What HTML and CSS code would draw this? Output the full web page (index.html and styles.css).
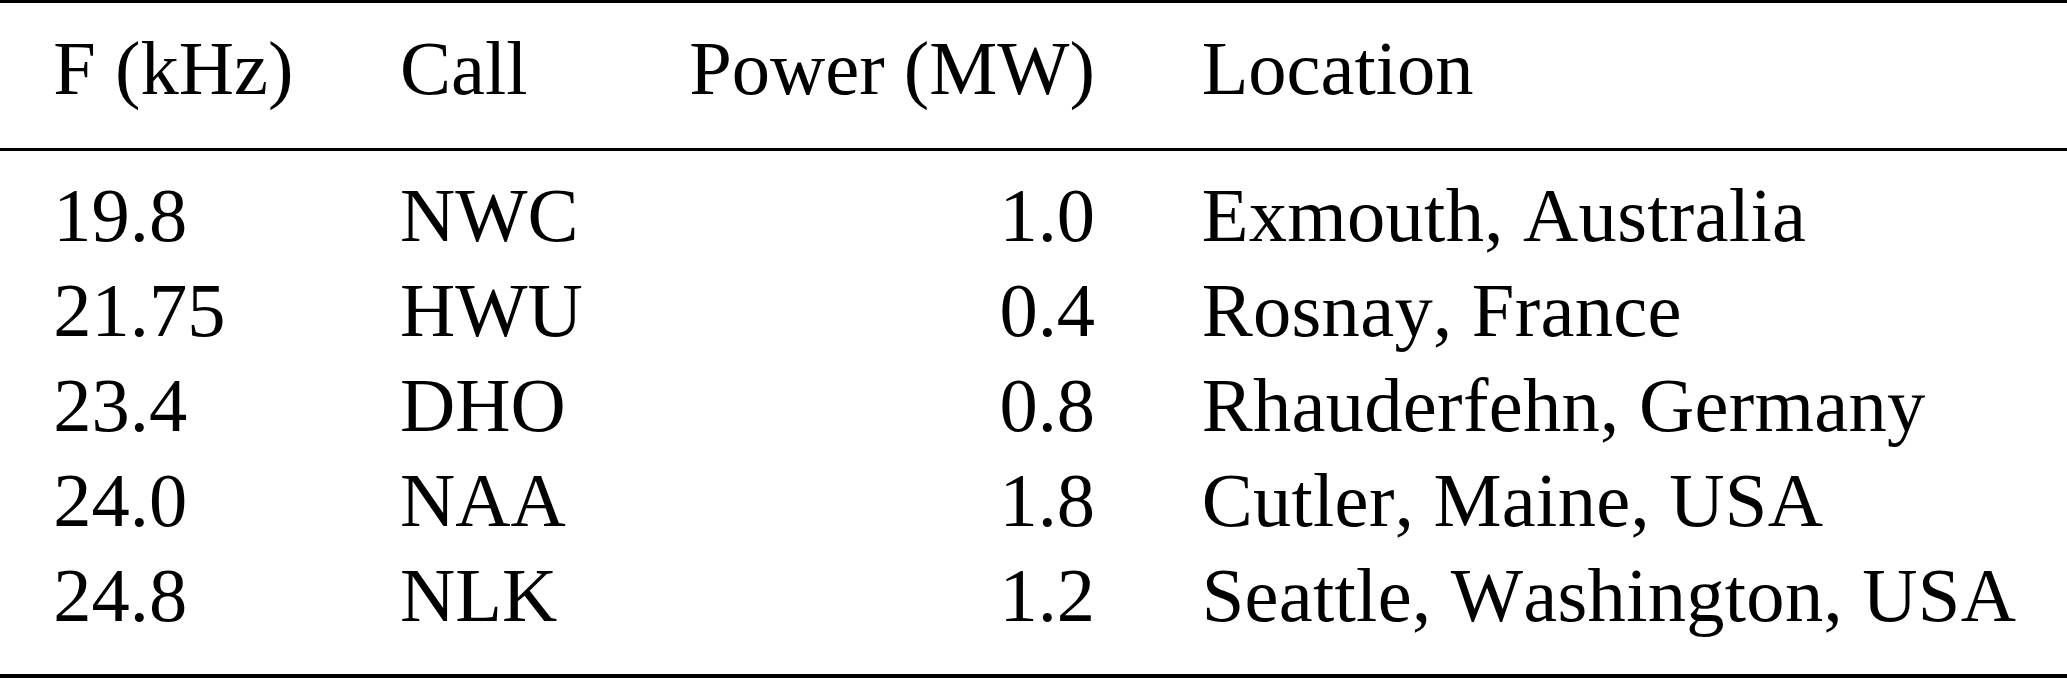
FILE: index.html
```html
<!DOCTYPE html>
<html lang="en">
<head>
<meta charset="utf-8">
<title>VLF transmitters</title>
<link rel="stylesheet" href="styles.css">
</head>
<body>
<table class="tbl">
  <thead>
    <tr>
      <th class="c1">F (kHz)</th>
      <th class="c2">Call</th>
      <th class="c3">Power (MW)</th>
      <th class="c4">Location</th>
    </tr>
  </thead>
  <tbody>
    <tr class="first"><td>19.8</td><td>NWC</td><td class="num">1.0</td><td class="loc">Exmouth, Australia</td></tr>
    <tr><td>21.75</td><td>HWU</td><td class="num">0.4</td><td class="loc">Rosnay, France</td></tr>
    <tr><td>23.4</td><td>DHO</td><td class="num">0.8</td><td class="loc">Rhauderfehn, Germany</td></tr>
    <tr><td>24.0</td><td>NAA</td><td class="num">1.8</td><td class="loc">Cutler, Maine, USA</td></tr>
    <tr class="last"><td>24.8</td><td>NLK</td><td class="num">1.2</td><td class="loc">Seattle, Washington, USA</td></tr>
  </tbody>
</table>
</body>
</html>
```

FILE: styles.css
```css
html, body {
  margin: 0;
  padding: 0;
  background: #ffffff;
}

.tbl {
  border-collapse: separate;
  border-spacing: 0;
  width: 100%;
  font-family: "Liberation Serif", "Times New Roman", serif;
  font-size: 76.5px;
  line-height: 95px;
  color: #000000;
  font-kerning: none;
}

.tbl th,
.tbl td {
  padding: 0 53.3px;
  text-align: left;
  font-weight: normal;
  white-space: nowrap;
  vertical-align: baseline;
}

.tbl th {
  border-top: 3px solid #000;
  border-bottom: 3px solid #000;
  padding-top: 18px;
  padding-bottom: 32px;
}

.tbl .c4 {
  width: 100%;
}

.tbl td.num {
  text-align: right;
}

.tbl td.loc {
  letter-spacing: 0.3px;
}

.tbl tr.first td {
  padding-top: 16.7px;
}

.tbl tr.last td {
  padding-bottom: 31px;
  border-bottom: 4px solid #000;
}
```
